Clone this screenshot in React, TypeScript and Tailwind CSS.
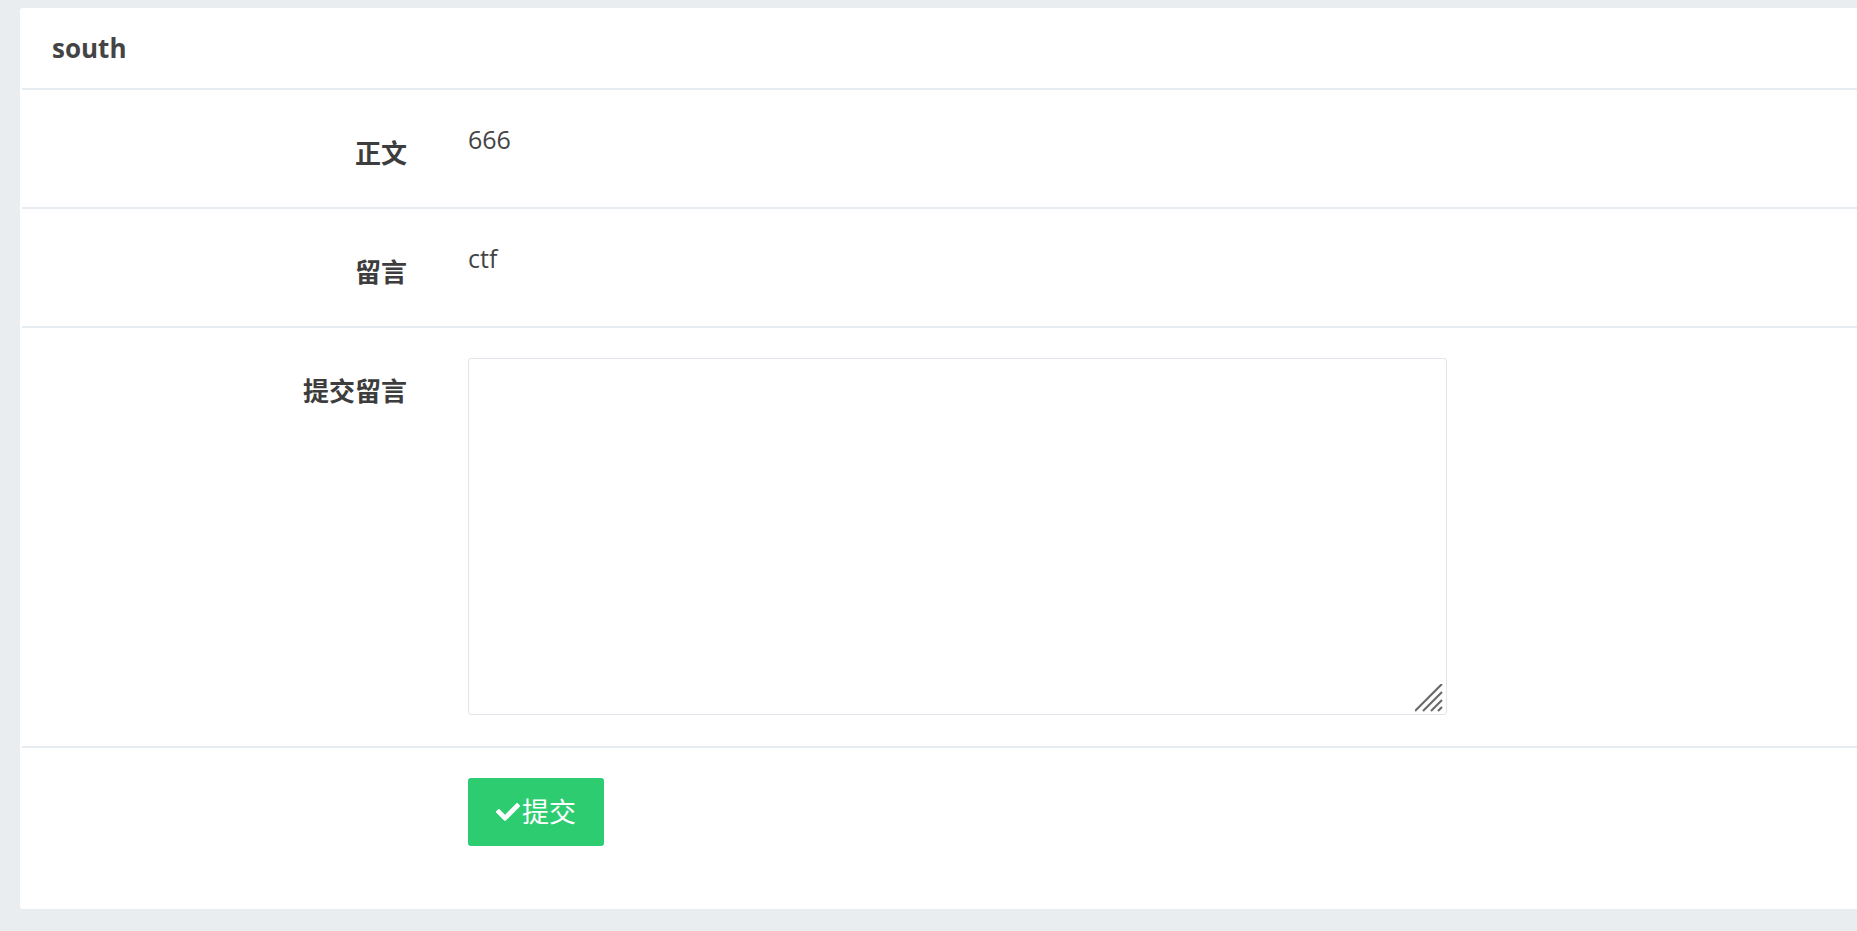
import React from 'react';
import { FaCheck } from 'react-icons/fa';

const font = { fontFamily: '"Open Sans", "Noto Sans CJK SC", sans-serif' };

function Label({ children }: { children: React.ReactNode }) {
  return (
    <div className="pt-[14px] text-right text-[26px] leading-[38px] font-bold text-[#3d3d3d]">
      {children}
    </div>
  );
}

export default function App() {
  return (
    <div className="min-h-screen bg-[#e9edf0] pt-[8px] pl-[20px] pb-[22px]" style={font}>
      <div className="bg-white rounded-l-[3px] h-[901px] overflow-hidden">
        {/* HEADER */}
        <div className="h-[80px] flex items-center pl-[32px]">
          <h1 className="text-[26px] font-bold text-[#444]">south</h1>
        </div>

        {/* ROWS */}
        <div className="ml-[2px] border-t-2 border-[#e7ebf2] h-[119px] pt-[30px] grid grid-cols-[385px_1fr] gap-x-[61px]">
          <Label>正文</Label>
          <div className="text-[25px] leading-[38px] text-[#444]">666</div>
        </div>

        <div className="ml-[2px] border-t-2 border-[#e7ebf2] h-[119px] pt-[30px] grid grid-cols-[385px_1fr] gap-x-[61px]">
          <Label>留言</Label>
          <div className="text-[25px] leading-[38px] text-[#444]">ctf</div>
        </div>

        <div className="ml-[2px] border-t-2 border-[#e7ebf2] pt-[30px] pb-[31px] grid grid-cols-[385px_1fr] gap-x-[61px]">
          <Label>提交留言</Label>
          <div>
            <div className="relative w-[979px] h-[357px]">
              <textarea className="block w-full h-full border border-[#e1e4ea] rounded-[3px] outline-none resize-none" />
              {/* resize grip */}
              <svg className="absolute right-[4px] bottom-[3px] pointer-events-none" width="28" height="28" viewBox="0 0 28 28">
                <g stroke="#6a6a6a" strokeWidth="2.2" strokeLinecap="butt">
                  <line x1="0" y1="27" x2="27" y2="0" />
                  <line x1="8" y1="27" x2="27" y2="8" />
                  <line x1="16" y1="27" x2="27" y2="16" />
                  <line x1="23" y1="27" x2="27" y2="23" />
                </g>
              </svg>
            </div>
          </div>
        </div>

        <div className="ml-[2px] border-t-2 border-[#e7ebf2] pt-[30px] grid grid-cols-[385px_1fr] gap-x-[61px]">
          <div />
          <div>
            <button className="h-[68px] px-[28px] bg-[#2ecc71] rounded-[3px] text-white text-[27px] flex items-center gap-[2px]">
              <FaCheck className="w-[24px] h-[24px]" />
              <span>提交</span>
            </button>
          </div>
        </div>
      </div>
    </div>
  );
}
